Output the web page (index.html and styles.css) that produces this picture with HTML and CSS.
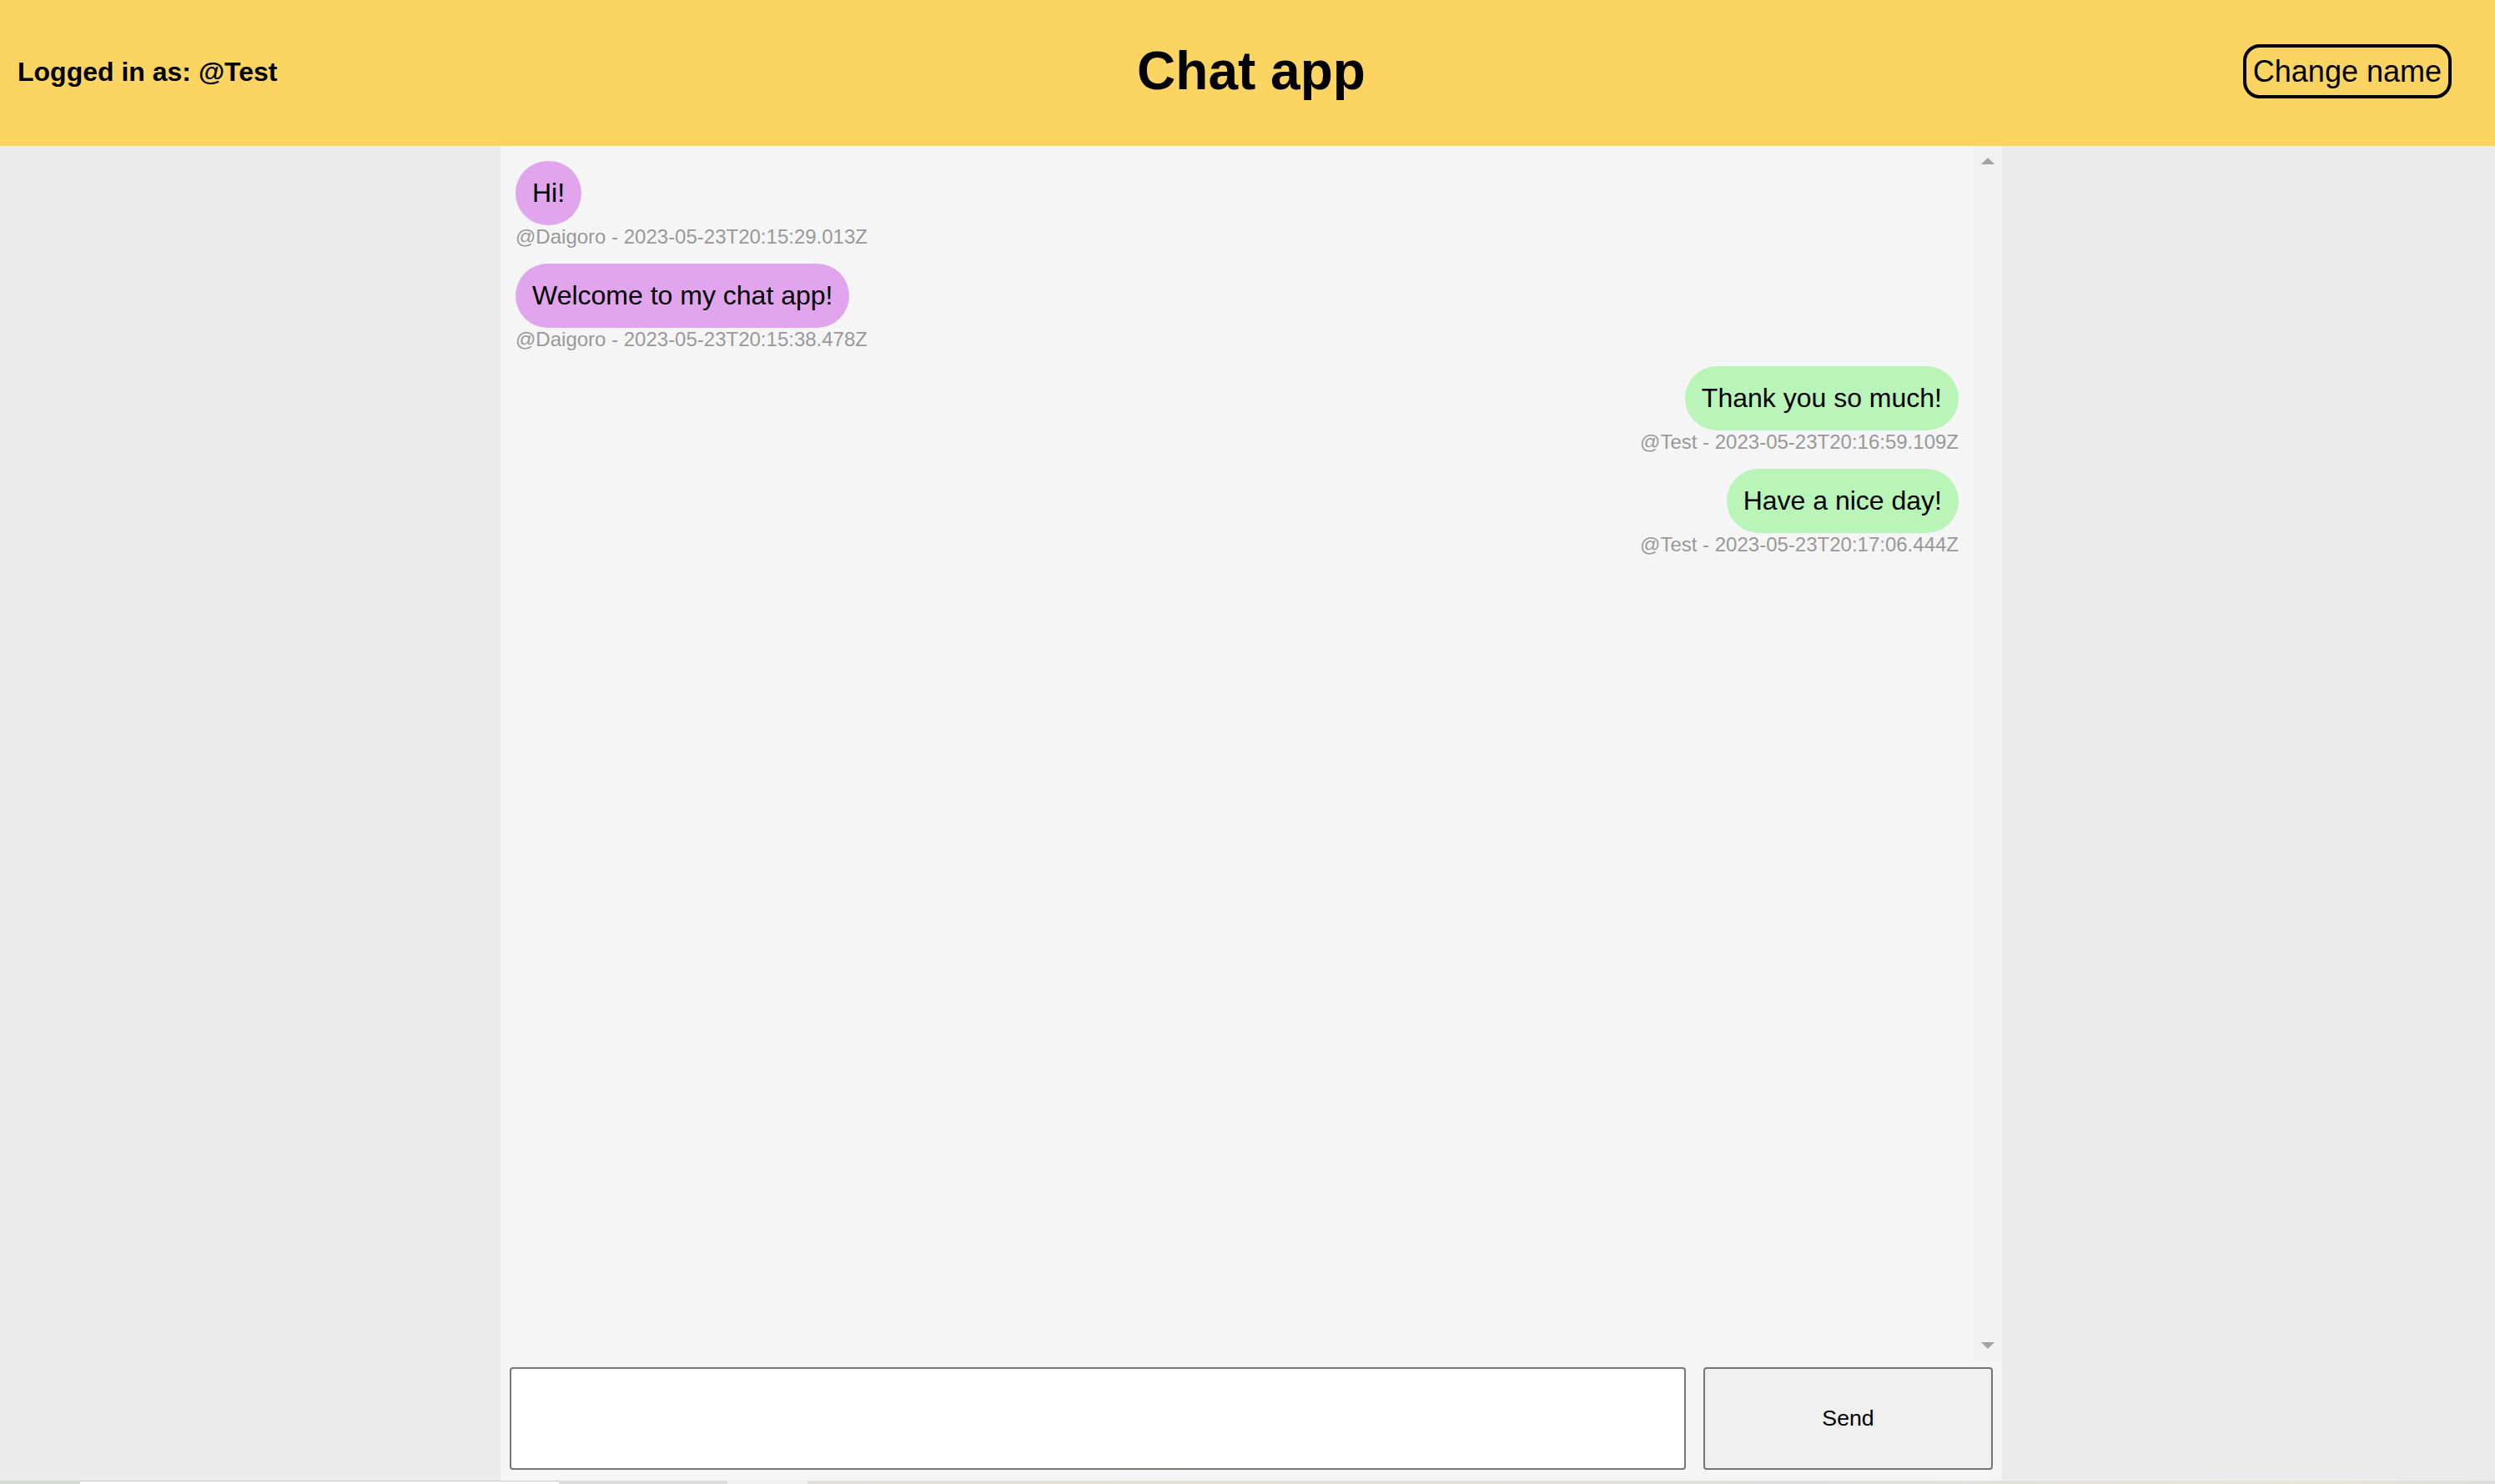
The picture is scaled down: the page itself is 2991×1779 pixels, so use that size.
FILE: index.html
```html
<!DOCTYPE html>
<html lang="en">
<head>
<meta charset="utf-8">
<title>Chat app</title>
<link rel="stylesheet" href="styles.css">
</head>
<body>
<header class="topbar">
  <div class="user">Logged in as: @Test</div>
  <h1 class="title">Chat app</h1>
  <button class="change-name" type="button">Change name</button>
</header>
<main class="layout">
  <section class="chat">
    <div class="chat-body">
      <div class="messages">
        <div class="msg theirs">
          <div class="bubble">Hi!</div>
          <div class="meta">@Daigoro - 2023-05-23T20:15:29.013Z</div>
        </div>
        <div class="msg theirs">
          <div class="bubble">Welcome to my chat app!</div>
          <div class="meta">@Daigoro - 2023-05-23T20:15:38.478Z</div>
        </div>
        <div class="msg mine">
          <div class="bubble">Thank you so much!</div>
          <div class="meta">@Test - 2023-05-23T20:16:59.109Z</div>
        </div>
        <div class="msg mine">
          <div class="bubble">Have a nice day!</div>
          <div class="meta">@Test - 2023-05-23T20:17:06.444Z</div>
        </div>
      </div>
      <div class="scrollbar">
        <span class="arrow up"></span>
        <span class="arrow down"></span>
      </div>
    </div>
    <form class="composer">
      <input class="composer-input" type="text" aria-label="Message">
      <button class="send" type="button">Send</button>
    </form>
  </section>
</main>
<div class="taskbar">
  <span class="seg seg-a"></span>
  <span class="seg seg-b"></span>
  <span class="seg seg-c"></span>
  <span class="seg seg-d"></span>
  <span class="seg seg-e"></span>
</div>
</body>
</html>
```

FILE: styles.css
```css
html, body {
  margin: 0;
  padding: 0;
}

body {
  font-family: "Liberation Sans", Arial, sans-serif;
  background: #ebebeb;
  color: #000;
  height: 1779px;
  overflow: hidden;
  display: flex;
  flex-direction: column;
}

.topbar {
  height: 175px;
  flex: none;
  background: #fcd462;
  display: grid;
  grid-template-columns: 1fr auto 1fr;
  align-items: center;
  padding: 0 21px;
  box-sizing: border-box;
}

.user {
  font-size: 32px;
  font-weight: bold;
  justify-self: start;
  margin-bottom: 2px;
}

.title {
  margin: 0 0 3px;
  font-size: 64px;
  font-weight: bold;
  line-height: 1.15;
  padding-left: 9px;
}

.change-name {
  justify-self: end;
  height: 65px;
  padding: 0 8px;
  margin: 0 31px 4px 0;
  border: 4px solid #000;
  border-radius: 20px;
  background: transparent;
  font-family: "Liberation Sans", Arial, sans-serif;
  font-size: 36px;
  color: #000;
}

.layout {
  flex: 1;
  display: flex;
  justify-content: center;
  padding-left: 9px;
  background: #ebebeb;
  min-height: 0;
}

.chat {
  width: 1800px;
  background: #f5f5f5;
  display: flex;
  flex-direction: column;
}

.chat-body {
  flex: 1;
  display: flex;
  min-height: 0;
}

.messages {
  flex: 1;
  padding: 18px;
  display: flex;
  flex-direction: column;
  gap: 18px;
}

.msg {
  display: flex;
  flex-direction: column;
}

.msg.theirs {
  align-items: flex-start;
}

.msg.mine {
  align-items: flex-end;
}

.bubble {
  font-size: 32px;
  padding: 20px;
  border-radius: 40px;
  line-height: normal;
}

.theirs .bubble {
  background: #e0a5ed;
}

.mine .bubble {
  background: #b9f4b9;
}

.meta {
  font-size: 24px;
  color: #999;
}

.scrollbar {
  width: 34px;
  background: #f1f1f1;
  display: flex;
  flex-direction: column;
  justify-content: space-between;
  align-items: center;
  padding: 14px 0 15px;
  box-sizing: border-box;
}

.arrow {
  width: 0;
  height: 0;
  border-left: 8px solid transparent;
  border-right: 8px solid transparent;
}

.arrow.up {
  border-bottom: 8px solid #a3a3a3;
}

.arrow.down {
  border-top: 8px solid #a3a3a3;
}

.composer {
  display: flex;
  gap: 21px;
  padding: 7px 11px 13px;
  margin: 0;
}

.composer-input {
  flex: 1;
  height: 123px;
  box-sizing: border-box;
  border: 2px solid #767676;
  border-radius: 4px;
  background: #fff;
  font-size: 26px;
  padding: 2px 6px;
}

.send {
  width: 347px;
  height: 123px;
  box-sizing: border-box;
  border: 2px solid #767676;
  border-radius: 4px;
  background: #efefef;
  font-family: "Liberation Sans", Arial, sans-serif;
  font-size: 26.67px;
  color: #000;
}

.taskbar {
  height: 4px;
  flex: none;
  display: flex;
  background: #dedede;
}

.seg {
  height: 100%;
}

.seg-a {
  width: 96px;
  background: #d6dbd6;
}

.seg-b {
  width: 574px;
  background: #fff;
  border-top: 1px solid #c8c8c8;
  box-sizing: border-box;
}

.seg-c {
  width: 202px;
  background: #dcdcdc;
}

.seg-d {
  width: 96px;
  background: #efefef;
}

.seg-e {
  flex: 1;
  background: linear-gradient(90deg, #e0dfdc, #e3e0d6 20%, #dfdfdf 60%, #e6e6d8 90%, #dcdcdc);
}
```
